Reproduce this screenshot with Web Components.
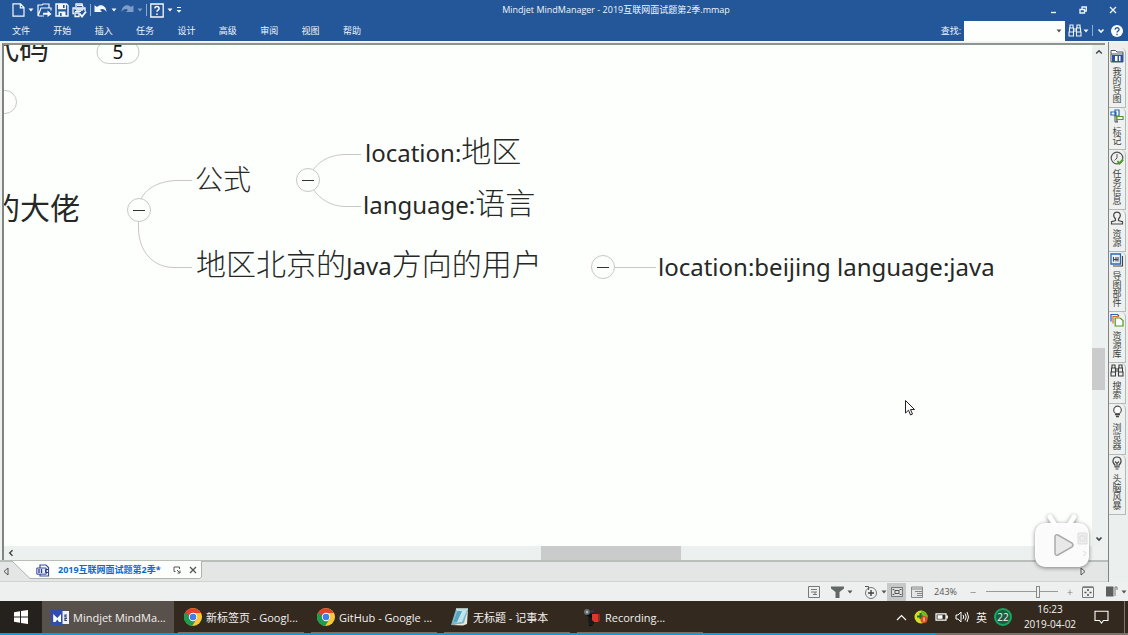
<!DOCTYPE html>
<html lang="zh-CN">
<head>
<meta charset="utf-8">
<title>Mindjet MindManager - 2019互联网面试题第2季.mmap</title>
<style>
  html, body { margin: 0; height: 100%; overflow: hidden; }
  body { font-family: "Open Sans", "Noto Sans CJK SC", sans-serif; font-size: 10px; }
</style>
</head>
<body>
<mind-app></mind-app>
<script>
const define = (name, markup, setup) => {
  const template = document.createElement('template');
  template.innerHTML = markup;
  customElements.define(name, class extends HTMLElement {
    connectedCallback() {
      if (this.shadowRoot) return;
      const root = this.attachShadow({ mode: 'open' });
      root.append(template.content.cloneNode(true));
      if (setup) setup(this, root);
    }
  });
};

const RESET = `
  *, *::before, *::after { box-sizing: border-box; }
  button, input { font: inherit; color: inherit; margin: 0; padding: 0; border: 0; background: none; border-radius: 0; }
  button { display: inline-flex; align-items: center; justify-content: center; }
  a { color: inherit; text-decoration: none; }
`;

/* name: [width, height, svg body] */
const ICONS = {
  caret: [6, 4, '<path d="M0.5 0.5h5L3 3.5z" fill="currentColor"/>'],
  newdoc: [13, 14, '<path d="M1 .8h7.5L12 4.5v8.7H1z M8.3 1v3.8H12" fill="none" stroke="currentColor" stroke-width="1.2"/>'],
  open: [15, 14, '<path d="M1 13V2h4l1-1h6v4M1 13l3-8h10v2.500M1 13h6" fill="none" stroke="currentColor" stroke-width="1.2"/><path d="M6 9.800h4.500V7.500L14.600 11l-4.100 3v-2.200H6z" fill="currentColor"/>'],
  save: [14, 14, '<path d="M1 1h10.5L13 2.5V13H1z" fill="none" stroke="currentColor" stroke-width="1.4"/><path d="M3 1h8v5.2H3zM3.5 8.5h7V13h-7z" fill="currentColor"/><path d="M8 2h1.6v3H8zM5 10h1.6v3H5z" fill="#235799"/>'],
  print: [15, 15, '<path d="M4 4V1h6l1 3M2 10.500H1V5h12v3M4 7h7M3 10h4v3.500H3z" fill="none" stroke="currentColor" stroke-width="1.300"/><path d="M5 2.500h5M2 6h11M3 8.500h6" stroke="currentColor"/><path d="M7.500 10.500l2.500 3L14 8.500" fill="none" stroke="currentColor" stroke-width="1.900"/>'],
  undo: [14, 12, '<path d="M.5 8V1.200L3 3C6-.3 12 .4 12.600 8c-2-3.300-4.600-3.600-6.600-2.200L8 8z" fill="currentColor"/>'],
  redo: [14, 12, '<path d="M13.500 8V1.200L11 3C8-.3 2 .4 1.400 8c2-3.300 4.600-3.600 6.600-2.200L6 8z" fill="currentColor"/>'],
  helpbox: [14, 15, '<path d="M.8 1h12.400v13H.8z" fill="none" stroke="currentColor" stroke-width="1.300"/><path d="M4.800 5.300c.3-2.500 4.500-2.200 4.300.2 0 1.500-2.100 1.600-2.100 3.200M7 10.400v1.600" fill="none" stroke="currentColor" stroke-width="1.600"/>'],
  custom: [6, 8, '<path d="M1 1.500h4" stroke="currentColor"/><path d="M.5 4h5L3 6.800z" fill="currentColor"/>'],
  min: [7, 8, '<path d="M1 6.500h5" stroke="currentColor" stroke-width="1.400"/>'],
  restore: [8, 8, '<path d="M1 3.500h4.500V7H1zM3 3V1h4.300v4H6" fill="none" stroke="currentColor" stroke-width="1.300"/>'],
  close: [8, 8, '<path d="M1 1l6 6M7 1L1 7" stroke="currentColor" stroke-width="1.300"/>'],
  binoc: [14, 13, '<path d="M2 1h3v3H2zM9 1h3v3H9zM1.500 4h4v4h-4zM8.500 4h4v4h-4zM1 8h4.500v4H1zM8.500 8H13v4H8.500zM5.500 5h3M5.500 7h3" fill="none" stroke="currentColor" stroke-width="1.100"/>'],
  down: [8, 6, '<path d="M1.500 1.500L4 4l2.500-2.500" fill="none" stroke="currentColor" stroke-width="1.700"/>'],
  up: [8, 6, '<path d="M1.200 4.500L4 1.700l2.800 2.800" fill="none" stroke="currentColor" stroke-width="1.400"/>'],
  left: [6, 8, '<path d="M4.500 1.200L1.700 4l2.800 2.800" fill="none" stroke="currentColor" stroke-width="1.400"/>'],
  right: [6, 8, '<path d="M1.500 1.200L4.300 4 1.500 6.800" fill="none" stroke="currentColor" stroke-width="1.400"/>'],
  help: [12, 12, '<circle cx="6" cy="6" r="6" fill="#fff"/><path d="M4 4.700C4.200 2 8.300 2.300 8 4.700 7.900 6 6 6 6 7.500M6 8.800v1.400" fill="none" stroke="#235799" stroke-width="1.400"/>'],
  folder: [14, 14, '<path d="M1 13V1.500h4.500L7 3h6v10z" fill="#fff" stroke="#4b5563"/><path d="M1 5h12" stroke="#4b5563"/><path d="M2 6h11v7H2z" fill="#2c52a8"/><path d="M5 7h2.500v5H5zM9 7h1.500v5H9z" fill="#fff"/>'],
  tag: [14, 14, '<path d="M7 1v12" stroke="#555" stroke-width="1.200"/><path d="M5 1h4v6H5zM1 3h5v3H1z" fill="#fff" stroke="#2b67b1" stroke-width="1.200"/><path d="M7 7.500h6v3H7z" fill="#fff" stroke="#4b9b24" stroke-width="1.200"/><path d="M5 7v6h3" fill="none" stroke="#555"/>'],
  clock: [14, 14, '<circle cx="7" cy="7" r="5.800" fill="none" stroke="#555" stroke-width="1.200"/><path d="M7 3v4L4.500 9.500" fill="none" stroke="#555"/><path d="M7.500 10l2 2.500L13 8.500" fill="none" stroke="#4b9b24" stroke-width="2"/>'],
  person: [14, 14, '<path d="M5.500 8C2 4 4 1.200 7 1.200S12 4 8.500 8v1.500l4 1.200V13h-11v-2.300l4-1.200z" fill="none" stroke="#484848" stroke-width="1.200"/>'],
  parts: [14, 14, '<path d="M1 1h9.500v10H1z" fill="#e8f0fb" stroke="#2b67b1" stroke-width="1.300"/><path d="M3 6.500h5M3.500 4v4.500M6 4v4.500M8 4v4.500M12.500 3v10H3" fill="none" stroke="#444" stroke-width="1.100"/>'],
  library: [14, 14, '<path d="M1 8.500v-7h6.500L9 3" fill="none" stroke="#2b67b1" stroke-width="1.200"/><path d="M3 10.500v-7h6" fill="none" stroke="#e06a28" stroke-width="1.200"/><path d="M5.200 5h4.800l3 2.500V13H5.200z" fill="#fff" stroke="#4b9b24" stroke-width="1.200"/>'],
  lens: [14, 14, '<circle cx="7.500" cy="5" r="3.800" fill="#fff" stroke="#555" stroke-width="1.200"/><path d="M5 9.500h5M6 11.500h3" stroke="#444" stroke-width="1.400"/>'],
  bulb: [14, 14, '<path d="M5 9C1.200 6 3 1 7 1s5.800 5 2 8v2H5zM5.500 13h3M5 5.500l2 2 2-2M7 7.500V11" fill="none" stroke="#444" stroke-width="1.100"/>'],
  docmap: [14, 13, '<path d="M4 4V1h6l2.500 2.500V12H4v-2" fill="#fff" stroke="#3b4b9a" stroke-width="1.200"/><path d="M.8 4h9.400v6.200H.8z" fill="#e5edf8" stroke="#3b4b9a"/><path d="M3 5v4M5.500 5v4" stroke="#333a80" stroke-width="1.300"/><path d="M12 5.500H9.500v3H12" fill="none" stroke="#333a80"/>'],
  pop: [8, 8, '<path d="M6.500 3V1H1v4.500h1.500M4 4l3 3M7 4.500V7H4.500" fill="none" stroke="currentColor"/>'],
  triL: [6, 9, '<path d="M5 1v7L1 4.500z" fill="none" stroke="currentColor"/>'],
  triR: [6, 9, '<path d="M1 1v7l4-3.500z" fill="none" stroke="currentColor"/>'],
  note: [12, 12, '<path d="M.5 .5h11v11H.5zM3 3.500h6M3 6h6M7 6v2.500H5M9 8.500h-2" fill="none" stroke="#777"/>'],
  funnel: [13, 12, '<path d="M0 .5h13v2L8.500 6v6h-4V6L0 2.500z" fill="#626866"/>'],
  addcirc: [14, 14, '<circle cx="7" cy="8" r="5.500" fill="none" stroke="#777"/><path d="M7 5v6M4 8h6" stroke="#444" stroke-width="1.400"/><path d="M1 1.500h3.500V5" fill="none" stroke="#555"/>'],
  mapview: [12, 12, '<path d="M.5 1.500h11v9H.5z" fill="#ddd" stroke="#777"/><path d="M4 4.500h4v3H4zM1.500 3.500H3l1 1M10.500 3.500H9l-1 1M1.500 8.500H3l1-1M10.500 8.500H9l-1-1" fill="none" stroke="#555"/>'],
  outline: [12, 12, '<path d="M.5 1h11v10.500H.5z" fill="#e4e6e5" stroke="#888"/><path d="M1 3h10M4 5.500h7M6 7.500h5M6 9.500h5" stroke="#888"/>'],
  fit: [12, 12, '<path d="M.5 1.500h11v10H.5z" fill="none" stroke="#777"/><path d="M6 3v2M6 8v2M2.500 6.500h2M7.500 6.500h2" stroke="#555" stroke-width="1.600"/><path d="M.5 .5h11" stroke="#999"/>'],
  panel: [12, 11, '<path d="M0 .5h7.500v10H0z" fill="#5b5f5e"/><path d="M9 10V1h2v3" fill="none" stroke="#777"/>'],
  windows: [14, 14, '<path d="M0 2.200l6-.9v5.200H0zM7 1.100L14 0v6.500H7zM0 7.500h6v5.200l-6-.9zM7 7.500h7V14l-7-1.100z" fill="#fff"/>'],
  mindjet: [18, 15, '<path d="M0 0h12v15H0z" fill="#2c4fb0"/><path d="M11.500 1H18v13h-6.500z" fill="#eef1f6"/><path d="M2.200 4v8h2.300l1.800-2.500L8 12h2V4L6.300 8z" fill="#fff"/><path d="M16 5h-2v2h2M16 8.500h-2v2h2" fill="none" stroke="#2a3a70" stroke-width="1.200"/>'],
  chrome: [18, 18, '<circle cx="9" cy="9" r="9" fill="#fcc934"/><path d="M1.200 4.500A9 9 0 0 0 8.200 18L12.500 11 9 9 9 5z" fill="#1e9b50"/><path d="M1.200 4.500A9 9 0 0 1 16.800 5H9a4 4 0 0 0-3.800 3z" fill="#e24133"/><path d="M1.200 4.500L5 11.200 9 9 5.200 8z" fill="#1e9b50"/><circle cx="9" cy="9" r="4.200" fill="#fff"/><circle cx="9" cy="9" r="3.300" fill="#3f7fec"/>'],
  notepad: [19, 18, '<path d="M6 1h12l-3 14L1 17z" fill="#75b8cb"/><path d="M7 2h10l-5 12-9 1z" fill="#bfe4ec"/><path d="M7 3h5L7 14l-4 1z" fill="#58a5bd"/><path d="M18 1l-1 15-4 1.500L1 17l13-2z" fill="#ece9db"/><path d="M6 1h12" stroke="#d7e8ea" stroke-width="1.500"/>'],
  camera: [18, 19, '<path d="M4 3l5-2 2 4v10l-2 3H6l1-8-4-3z" fill="#0c0e10"/><path d="M5 10h5v7H6z" fill="#17191b"/><circle cx="4" cy="4" r="3" fill="#666d70"/><circle cx="9" cy="3.500" r="2.200" fill="#33383b"/><circle cx="4" cy="4" r="1.200" fill="#bbb"/><path d="M9 6h6v8h-4L9 12z" fill="#d9382b"/><path d="M15 6v8l2-1V6z" fill="#8e2b23"/>'],
  trayup: [11, 7, '<path d="M1 6l4.500-4.500L10 6" fill="none" stroke="#fff" stroke-width="1.200"/>'],
  guard: [14, 14, '<circle cx="7" cy="7" r="6.500" fill="#d7df23"/><path d="M7 .5A6.500 6.500 0 0 1 13.500 7H7z" fill="#72b82a"/><path d="M3 6.500h6M6.500 3v6" stroke="#176b2c" stroke-width="2"/><circle cx="10" cy="9.500" r="3.500" fill="#e1491c"/><path d="M10 7.500v4" stroke="#fff"/>'],
  battery: [13, 8, '<path d="M1 .8h10v6.400H1zM12.300 2.500v3" fill="none" stroke="#fff" stroke-width="1.200"/><path d="M2.500 2.200h5v3.600h-5z" fill="#fff"/>'],
  speaker: [14, 12, '<path d="M1 4h2l3-3v10L3 8H1zM8 4q1.500 2 0 4M10 2.500q2.500 3.500 0 7M12 1q3 5 0 10" fill="none" stroke="#fff"/>'],
  notify: [15, 14, '<path d="M1 1.200h13v9.300H9.500L7.500 13l-2-2.500H1z" fill="none" stroke="#fff" stroke-width="1.100"/>']
};
customElements.define('ui-icon', class extends HTMLElement {
  connectedCallback() {
    if (this.shadowRoot) return;
    const [w, h, body] = ICONS[this.getAttribute('name')];
    this.attachShadow({ mode: 'open' }).innerHTML =
      `<style>:host{display:block;flex:none}svg{display:block}</style>
       <svg width="${w}" height="${h}" viewBox="0 0 ${w} ${h}" aria-hidden="true">${body}</svg>`;
  }
});

define('quick-access', `
<style>${RESET}
  :host { display: flex; align-items: center; gap: 3px; padding-left: 12px; color: #f4f8ff; }
  button { gap: 3px; height: 18px; }
  .sep { width: 1px; height: 12px; background: #8fabd0; }
  .off { color: #7d9cc8; }
</style>
<button aria-label="新建"><ui-icon name="newdoc"></ui-icon><ui-icon name="caret"></ui-icon></button>
<button aria-label="打开"><ui-icon name="open"></ui-icon></button>
<button aria-label="保存"><ui-icon name="save"></ui-icon></button>
<button aria-label="打印"><ui-icon name="print"></ui-icon></button>
<span class="sep"></span>
<button aria-label="撤销"><ui-icon name="undo"></ui-icon><ui-icon name="caret"></ui-icon></button>
<button aria-label="重做" class="off"><ui-icon name="redo"></ui-icon><ui-icon name="caret"></ui-icon></button>
<span class="sep"></span>
<button aria-label="帮助"><ui-icon name="helpbox"></ui-icon><ui-icon name="caret"></ui-icon></button>
<button aria-label="自定义"><ui-icon name="custom"></ui-icon></button>
`);

define('app-header', `
<style>${RESET}
  :host { display: block; flex: none; background: #235799; color: #f0f5fc; }
  .row { display: flex; align-items: center; }
  .title { height: 20px; }
  h1 { flex: 1; margin: 0; text-align: center; font-size: 9px; line-height: 20px; font-weight: 400; }
  .win { display: flex; align-items: center; gap: 22px; padding-right: 11px; }
  .menu { height: 21px; justify-content: space-between; font-size: 9px; }
  nav { display: flex; justify-content: space-between; width: 349px; margin-left: 12px; }
  nav a { line-height: 21px; }
  .find { display: flex; align-items: center; gap: 3px; height: 21px; padding-right: 5px; }
  .combo { display: flex; height: 20px; width: 101px; background: #fdfffd; color: #555; }
  .combo input { flex: 1; min-width: 0; padding-left: 4px; }
  .combo button { width: 12px; }
  .bino { gap: 1px; }
  .sep { width: 1px; height: 11px; background: #8fabd0; }
  .last { display: flex; align-items: center; gap: 6px; padding-left: 1px; }
</style>
<div class="row title">
  <quick-access></quick-access>
  <h1>Mindjet MindManager - 2019互联网面试题第2季.mmap</h1>
  <div class="win">
    <button aria-label="最小化"><ui-icon name="min"></ui-icon></button>
    <button aria-label="还原"><ui-icon name="restore"></ui-icon></button>
    <button aria-label="关闭"><ui-icon name="close"></ui-icon></button>
  </div>
</div>
<div class="row menu">
  <nav><a href="#">文件</a><a href="#">开始</a><a href="#">插入</a><a href="#">任务</a><a href="#">设计</a><a href="#">高级</a><a href="#">审阅</a><a href="#">视图</a><a href="#">帮助</a></nav>
  <div class="find">
    <label for="q">查找:</label>
    <span class="combo"><input id="q" type="text"><button aria-label="查找历史"><ui-icon name="caret"></ui-icon></button></span>
    <button class="bino" aria-label="查找"><ui-icon name="binoc"></ui-icon><ui-icon name="caret"></ui-icon></button>
    <span class="sep"></span>
    <span class="last">
      <button aria-label="折叠功能区"><ui-icon name="down"></ui-icon></button>
      <button aria-label="帮助"><ui-icon name="help"></ui-icon></button>
    </span>
  </div>
</div>
`);

/* Topic on the map: x is its left edge, y the middle of its text */
define('map-topic', `
<style>
  :host { position: absolute; left: var(--x); top: var(--y); transform: translateY(-50%); display: block;
    white-space: nowrap; font: 24px/36px "Noto Sans", "Noto Sans CJK SC", sans-serif; color: #262826; }
  ::slotted(span) { font-size: 30px; font-weight: 300; }
  :host([small]) ::slotted(span) { font-size: 28px; }
  :host([strong]) ::slotted(span) { font-weight: 400; }
</style><slot></slot>`, el => {
  el.style.setProperty('--x', el.getAttribute('x') + 'px');
  el.style.setProperty('--y', el.getAttribute('y') + 'px');
});

define('map-toggle', `
<style>${RESET}
  :host { position: absolute; left: var(--x); top: var(--y); display: block; transform: translate(-50%, -50%); }
  button { width: 24px; height: 24px; border: 1px solid #c6c8c6; border-radius: 12px; background: #fdfffd; }
  i { width: 12px; height: 1px; background: #333; }
  :host([count]) button { width: 43px; font: 19px/22px "Noto Sans", sans-serif; color: #111; }
  :host([count]) i, :host([plain]) i { display: none; }
</style><button aria-label="展开或折叠"><i></i><slot></slot></button>`, el => {
  el.style.setProperty('--x', el.getAttribute('x') + 'px');
  el.style.setProperty('--y', el.getAttribute('y') + 'px');
});

define('map-canvas', `
<style>${RESET}
  :host { display: block; position: relative; overflow: hidden; background: #fdfffd; }
  .world { position: absolute; left: -4px; top: -45px; width: 1128px; height: 600px; }
  svg { display: block; }
  .cursor { position: absolute; left: 904px; top: 399px; }
</style>
<div class="world">
  <svg width="1128" height="600" fill="none" stroke="#c6c8c6" aria-hidden="true">
    <path d="M138.500 210C138.500 192 156 180.500 178 180.500H192M138.500 210V228C138.500 250 152 267.500 174 267.500H192"/>
    <path d="M308 180C314 163 328 154.500 346 154.500H361M308 180C316 198 330 206.500 346 206.500H361"/>
    <path d="M614 267.500H656"/>
  </svg>
  <map-topic x="-11" y="49" strong><span>代码</span></map-topic>
  <map-toggle x="118" y="52" count>5</map-toggle>
  <map-toggle x="5" y="103" plain></map-toggle>
  <map-topic x="-10" y="209" strong><span>的大佬</span></map-topic>
  <map-toggle x="139" y="210"></map-toggle>
  <map-topic x="195" y="180" small><span>公式</span></map-topic>
  <map-toggle x="308" y="180"></map-toggle>
  <map-topic x="365" y="152">location:<span>地区</span></map-topic>
  <map-topic x="363" y="204">language:<span>语言</span></map-topic>
  <map-topic x="196" y="265"><span>地区北京的</span>Java<span>方向的用户</span></map-topic>
  <map-toggle x="603" y="267"></map-toggle>
  <map-topic x="658" y="267">location:beijing language:java</map-topic>
  <svg class="cursor" width="12" height="18" viewBox="0 0 12 18" aria-hidden="true">
    <path d="M1.500 1.500V14l3-2.800 2 4.800 2-.9-2-4.600h4z" fill="#fff" stroke="#222"/>
  </svg>
</div>
`);

/* The start and end attributes name the icons of the two arrow buttons */
customElements.define('scroll-bar', class extends HTMLElement {
  connectedCallback() {
    if (this.shadowRoot) return;
    const arrow = side => `<button aria-label="滚动"><ui-icon name="${this.getAttribute(side)}"></ui-icon></button>`;
    this.attachShadow({ mode: 'open' }).innerHTML = `
<style>${RESET}
  :host { display: flex; background: #ecf0ee; color: #444; }
  :host([vertical]) { flex-direction: column; }
  button { flex: none; width: 13px; height: 14px; }
  .before { flex: var(--before); } .thumb { flex: var(--thumb); background: #c9ccca; } .after { flex: var(--after); }
</style>
${arrow('start')}<span class="before"></span><span class="thumb"></span><span class="after"></span>${arrow('end')}`;
  }
});

define('side-tab', `
<style>${RESET}
  :host { display: block; }
  button { display: flex; flex-direction: column; justify-content: flex-start; gap: 4px; width: 17px; padding: 1px 1px 4px 0;
    border: 1px solid #b5bab7; border-left: 0; border-top: 0; border-top-right-radius: 5px; color: #3c3f3d; background: #eef1ef; }
  span { writing-mode: vertical-rl; text-orientation: upright; font-size: 9px; line-height: 14px; }
</style>
<button><slot name="icon"></slot><span><slot></slot></span></button>
`);

define('side-rail', `
<style>${RESET}
  :host { display: flex; flex-direction: column; padding-top: 6px; border-left: 1px solid #7f8682; background: #ebefed; }
</style>
<side-tab><ui-icon slot="icon" name="folder"></ui-icon>我的导图</side-tab>
<side-tab><ui-icon slot="icon" name="tag"></ui-icon>标记</side-tab>
<side-tab><ui-icon slot="icon" name="clock"></ui-icon>任务信息</side-tab>
<side-tab><ui-icon slot="icon" name="person"></ui-icon>资源</side-tab>
<side-tab><ui-icon slot="icon" name="parts"></ui-icon>导图部件</side-tab>
<side-tab><ui-icon slot="icon" name="library"></ui-icon>资源库</side-tab>
<side-tab><ui-icon slot="icon" name="binoc"></ui-icon>搜索</side-tab>
<side-tab><ui-icon slot="icon" name="lens"></ui-icon>浏览器</side-tab>
<side-tab><ui-icon slot="icon" name="bulb"></ui-icon>头脑风暴</side-tab>
`);

define('doc-tabs', `
<style>${RESET}
  :host { display: flex; height: 22px; align-items: flex-start; background: #e3e6e4; border-top: 2px solid #b9beba; border-bottom: 1px solid #d0d4d1; color: #555; }
  .scroll { width: 12px; height: 18px; }
  .tab { position: relative; display: flex; align-items: center; width: 190px; height: 18px; margin-top: -1px; padding-left: 24px; }
  .shape { position: absolute; left: 0; top: 0; width: 100%; height: 100%; }
  .tab > :not(.shape) { position: relative; }
  a { margin: 0 12px 0 8px; color: #1267cc; font-size: 9px; font-weight: 700; line-height: 18px; white-space: nowrap; }
  .tab button + button { margin-left: 8px; }
  .next { margin-left: auto; margin-right: 19px; }
</style>
<button class="scroll" aria-label="上一个"><ui-icon name="triL"></ui-icon></button>
<div class="tab">
  <svg class="shape" viewBox="0 0 190 18" preserveAspectRatio="none" aria-hidden="true"><path d="M0 0L18 17.500H187.500L189.500 16V0z" fill="#fdfffd" stroke="#aeb3af"/><path d="M1 0h188" stroke="#fdfffd" stroke-width="2"/></svg>
  <ui-icon name="docmap"></ui-icon>
  <a href="#">2019互联网面试题第2季*</a>
  <button aria-label="浮动窗口"><ui-icon name="pop"></ui-icon></button>
  <button aria-label="关闭文档"><ui-icon name="close"></ui-icon></button>
</div>
<button class="scroll next" aria-label="下一个"><ui-icon name="triR"></ui-icon></button>
`);

define('map-editor', `
<style>${RESET}
  :host { display: flex; flex-direction: column; min-width: 0; background: #eef1ef; }
  .frame { flex: 1; min-height: 0; display: grid; grid-template: minmax(0, 1fr) 14px / minmax(0, 1fr) 13px;
    margin: 1px 3px 0 2px; border-top: 2px solid #8c968e; border-left: 2px solid #7f8682; }
  .v { --before: 289; --thumb: 42; --after: 142; }
  .h { --before: 524; --thumb: 140; --after: 398; }
</style>
<div class="frame">
  <map-canvas></map-canvas>
  <scroll-bar class="v" vertical start="up" end="down"></scroll-bar>
  <scroll-bar class="h" start="left" end="right"></scroll-bar>
</div>
<doc-tabs></doc-tabs>
`);

define('status-bar', `
<style>${RESET}
  :host { display: flex; align-items: center; justify-content: flex-end; height: 19px; flex: none; padding-right: 1px; background: #edf0ee; color: #555; }
  button { gap: 3px; height: 18px; }
  .on { width: 19px; background: #c6c9c7; }
  output { font-size: 9px; line-height: 18px; margin: 0 12px 0 11px; }
  .step { width: 8px; font-size: 11px; color: #888; }
  input { -webkit-appearance: none; appearance: none; width: 72px; height: 14px; margin: 0 8px 0 9px; background: linear-gradient(#999, #999) center / 100% 1px no-repeat; }
  input::-webkit-slider-thumb { -webkit-appearance: none; width: 4px; height: 12px; border: 1px solid #888; background: #eef1ef; }
  .group { display: flex; align-items: center; }
  .a { gap: 11px; } .b { gap: 5px; } .c { gap: 12px; margin-left: 8px; }
</style>
<div class="group a">
  <button aria-label="备注"><ui-icon name="note"></ui-icon></button>
  <button aria-label="筛选"><ui-icon name="funnel"></ui-icon><ui-icon name="caret"></ui-icon></button>
  <button aria-label="详细级别"><ui-icon name="addcirc"></ui-icon><ui-icon name="caret"></ui-icon></button>
</div>
<div class="group b">
  <button class="on" aria-label="导图视图"><ui-icon name="mapview"></ui-icon></button>
  <button aria-label="大纲视图"><ui-icon name="outline"></ui-icon></button>
</div>
<output>243%</output>
<button class="step" aria-label="缩小">−</button>
<input type="range" min="0" max="100" value="74" aria-label="缩放">
<button class="step" aria-label="放大">+</button>
<div class="group c">
  <button aria-label="适合窗口"><ui-icon name="fit"></ui-icon></button>
  <button aria-label="任务窗格"><ui-icon name="panel"></ui-icon><ui-icon name="caret"></ui-icon></button>
</div>
`);

define('task-button', `
<style>${RESET}
  :host { display: block; }
  button { width: 100%; height: 32px; justify-content: flex-start; gap: 4px; padding-left: 9px; font-size: 11px; color: #f2f0ee; white-space: nowrap; }
  :host([active]) button { background: #57504b; }
  :host(:not([active])) button { background: linear-gradient(#7d6f63, #7d6f63) center bottom / 126px 1px no-repeat; }
</style><button><slot name="icon"></slot><span><slot></slot></span></button>`);

define('task-bar', `
<style>${RESET}
  :host { display: flex; height: 32px; flex: none; background: #33291f; color: #f4f2f0; }
  .start { width: 42px; background: #25221d; }
  .apps { display: grid; grid-template-columns: repeat(5, 132px); gap: 1px; }
  .tray { display: flex; align-items: center; margin-left: auto; gap: 7px; }
  .ime { font-size: 11px; }
  .badge { width: 18px; height: 18px; border: 2px solid #15a862; border-radius: 9px; background: #175f40; font-size: 10px; line-height: 14px; text-align: center; }
  time { display: flex; flex-direction: column; align-items: center; width: 62px; font-size: 10px; line-height: 15px; }
  .notify { margin: 0 8px 0 6px; }
  .desk { width: 4px; height: 32px; border-left: 1px solid #7c756e; }
</style>
<button class="start" aria-label="开始"><ui-icon name="windows"></ui-icon></button>
<div class="apps">
  <task-button active><ui-icon slot="icon" name="mindjet"></ui-icon>Mindjet MindMa...</task-button>
  <task-button><ui-icon slot="icon" name="chrome"></ui-icon>新标签页 - Googl...</task-button>
  <task-button><ui-icon slot="icon" name="chrome"></ui-icon>GitHub - Google ...</task-button>
  <task-button><ui-icon slot="icon" name="notepad"></ui-icon>无标题 - 记事本</task-button>
  <task-button><ui-icon slot="icon" name="camera"></ui-icon>Recording...</task-button>
</div>
<div class="tray">
  <ui-icon name="trayup"></ui-icon>
  <ui-icon name="guard"></ui-icon>
  <ui-icon name="battery"></ui-icon>
  <ui-icon name="speaker"></ui-icon>
  <span class="ime">英</span>
  <span class="badge">22</span>
  <time datetime="2019-04-02T16:23"><span>16:23</span><span>2019-04-02</span></time>
  <button class="notify" aria-label="通知"><ui-icon name="notify"></ui-icon></button>
  <span class="desk"></span>
</div>
`);

/* Floating badge of the video player */
define('player-badge', `
<style>
  :host { position: absolute; right: 37px; bottom: 65px; display: block; filter: drop-shadow(0 1px 2px #0007); }
  svg { display: block; }
</style>
<svg width="58" height="56" viewBox="0 0 58 56" role="img" aria-label="播放">
  <path d="M17 3l5 8M41 3l-5 8" stroke="#fff" stroke-width="5" stroke-linecap="round"/>
  <rect x="2" y="9" width="54" height="44" rx="10" fill="#fff" fill-opacity=".96"/>
  <path d="M45 19h9v11h-9z" fill="#eee" stroke="#ddd"/><path d="M47 22h5v5h-5zM50 37l3 2.500-3 2.500" fill="none" stroke="#ddd"/>
  <path d="M22 23q0-3 3-2l14 8q2 2 0 4l-14 8q-3 1-3-2z" fill="#e8e8e8" stroke="#aaa" stroke-width="1.500"/>
</svg>`);

define('mind-app', `
<style>${RESET}
  :host { position: relative; display: flex; flex-direction: column; height: 100vh; overflow: hidden; }
  main { flex: 1; min-height: 0; display: grid; grid-template-columns: minmax(0, 1fr) 20px; border-top: 1px solid #f4f7f5; }
  progress { -webkit-appearance: none; appearance: none; display: block; flex: none; width: 100%; height: 2px; border: 0; background: #77736f; }
  progress::-webkit-progress-bar { background: #77736f; }
  progress::-webkit-progress-value { background: #00a1e9; }
</style>
<app-header></app-header>
<main>
  <map-editor></map-editor>
  <side-rail></side-rail>
</main>
<status-bar></status-bar>
<task-bar></task-bar>
<progress value="83" max="100" aria-label="播放进度"></progress>
<player-badge></player-badge>
`);
</script>
</body>
</html>
